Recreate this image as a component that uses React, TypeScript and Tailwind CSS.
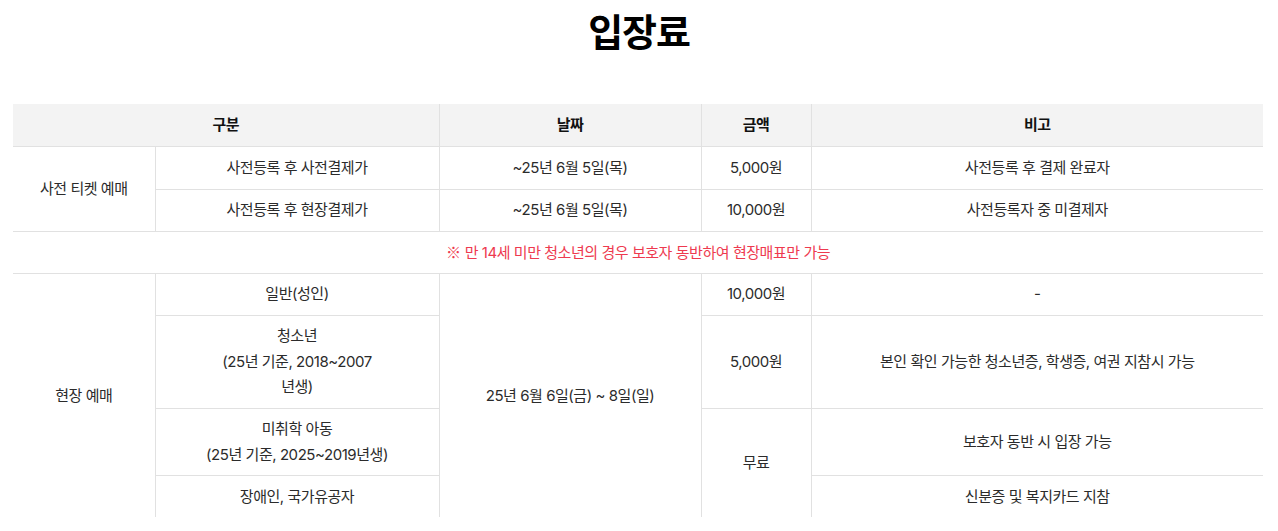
import React from "react";

const font = {
  fontFamily: '"Inter", "Noto Sans CJK KR", sans-serif',
};

export default function App() {
  const td = "border border-[#e1e1e1] text-center align-middle px-2 py-0";
  return (
    <div className="bg-white w-[1278px] min-h-[531px] text-[#2b2b2b]" style={font}>
      <h1 className="pt-[7px] text-center text-[38px] font-bold leading-[50px] text-black tracking-[-0.03em]">
        입장료
      </h1>
      <div className="ml-[13px] mt-[47px] w-[1250px]">
        <table className="w-full border-collapse border-hidden text-[15px] leading-[1.7] tracking-[-0.03em] table-fixed">
          <colgroup>
            <col className="w-[142px]" />
            <col className="w-[284px]" />
            <col className="w-[262px]" />
            <col className="w-[110px]" />
            <col className="w-[452px]" />
          </colgroup>
          <thead>
            <tr className="h-[42px] bg-[#f3f3f3]">
              <th colSpan={2} className={td + " font-bold text-[#111]"}>구분</th>
              <th className={td + " font-bold text-[#111]"}>날짜</th>
              <th className={td + " font-bold text-[#111]"}>금액</th>
              <th className={td + " font-bold text-[#111]"}>비고</th>
            </tr>
          </thead>
          <tbody>
            <tr className="h-[43px]">
              <td rowSpan={2} className={td}>사전 티켓 예매</td>
              <td className={td}>사전등록 후 사전결제가</td>
              <td className={td}>~25년 6월 5일(목)</td>
              <td className={td}>5,000원</td>
              <td className={td}>사전등록 후 결제 완료자</td>
            </tr>
            <tr className="h-[42px]">
              <td className={td}>사전등록 후 현장결제가</td>
              <td className={td}>~25년 6월 5일(목)</td>
              <td className={td}>10,000원</td>
              <td className={td}>사전등록자 중 미결제자</td>
            </tr>
            <tr className="h-[42px]">
              <td colSpan={5} className={td + " text-[#ee3a4f]"}>
                <span className="font-['Noto_Sans_CJK_KR'] tracking-normal">※</span> 만 14세 미만 청소년의 경우 보호자 동반하여 현장매표만 가능
              </td>
            </tr>
            <tr className="h-[42px]">
              <td rowSpan={5} className={td}>현장 예매</td>
              <td className={td}>일반(성인)</td>
              <td rowSpan={5} className={td}>25년 6월 6일(금) ~ 8일(일)</td>
              <td className={td}>10,000원</td>
              <td className={td}>-</td>
            </tr>
            <tr className="h-[93px]">
              <td className={td}>
                청소년
                <br />
                (25년 기준, 2018~2007
                <br />
                년생)
              </td>
              <td className={td}>5,000원</td>
              <td className={td}>본인 확인 가능한 청소년증, 학생증, 여권 지참시 가능</td>
            </tr>
            <tr className="h-[67px]">
              <td className={td}>
                미취학 아동
                <br />
                (25년 기준, 2025~2019년생)
              </td>
              <td rowSpan={2} className={td}>무료</td>
              <td className={td}>보호자 동반 시 입장 가능</td>
            </tr>
            <tr className="h-[42px]">
              <td className={td}>장애인, 국가유공자</td>
              <td className={td}>신분증 및 복지카드 지참</td>
            </tr>
          </tbody>
        </table>
      </div>
    </div>
  );
}
